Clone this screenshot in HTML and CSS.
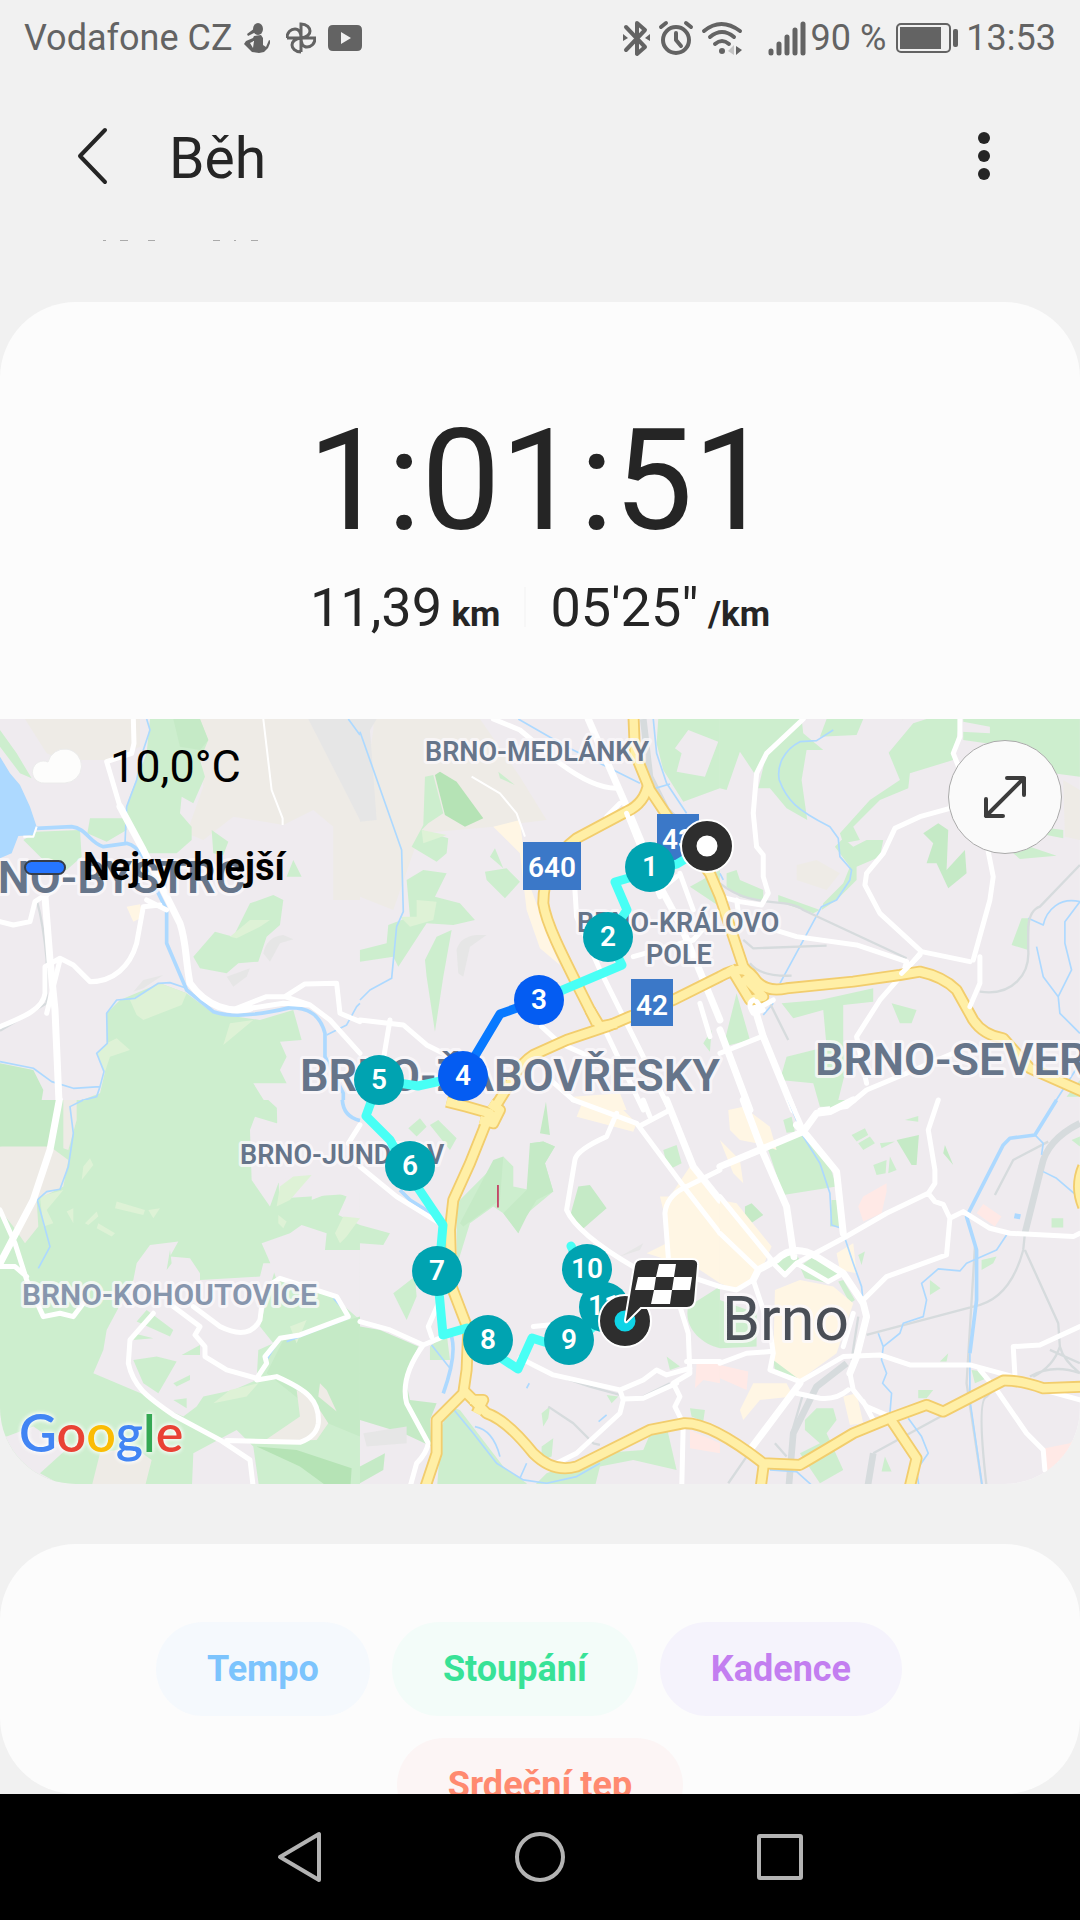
FILE: index.html
```
<!DOCTYPE html>
<html lang="cs">
<head>
  <meta charset="UTF-8" />
  <meta name="viewport" content="width=device-width, initial-scale=1.0" />
  <title>Běh</title>
  <link rel="stylesheet" href="styles.css">
</head>
<body>
  <div class="status-bar">
    <div class="status-left">
      <span>Vodafone CZ</span>
      <svg class="icon-run" width="26" height="30" viewBox="0 0 26 30">
        <ellipse cx="14" cy="6" rx="5" ry="6"/>
        <path d="M11 5 L3 11 4 13 12 9Z M10 13 L17 12 19 15 19 22 22 24 25 17 27 18 24 25 20 29 15 30 8 29 0 21 2 18 9 15Z M6 20 L9 25 10 18Z" fill-rule="evenodd"/>
      </svg>
      <svg class="icon-photos" width="30" height="32" viewBox="0 0 30 32">
        <path d="M15 30V2C21 2 24 6 24 9C24 13 20 15 16 16M1 16H29C29 22 25 25 21 25C17 25 15 21 15 16M15 30C9 30 6 26 6 23C6 19 10 17 14 16M1 16C1 10 5 7 9 7C13 7 15 11 15 16"/>
      </svg>
      <svg class="icon-video" width="34" height="26" viewBox="0 0 34 26">
        <path d="M5 0H29Q34 0 34 5V21Q34 26 29 26H5Q0 26 0 21V5Q0 0 5 0Z M13 7V19L23 13Z" fill-rule="evenodd"/>
      </svg>
    </div>
    <div class="status-right">
      <svg width="28" height="36" viewBox="0 0 28 36">
        <path class="line" d="M3 7 L22 27 14 34 V3 L22 10 3 30"/>
        <path d="M0 14 L5 18 0 21Z M27 14 L22 18 27 21Z"/>
      </svg>
      <svg width="34" height="36" viewBox="0 0 34 36">
        <circle class="line" cx="17" cy="20" r="13"/>
        <path class="line" d="M17 13V20L22 26 M2 7L7 3 M32 7L27 3"/>
      </svg>
      <svg class="icon-wifi" width="42" height="36" viewBox="0 0 42 36">
        <path class="line" d="M3 11Q20 -3 39 11 M9 17Q21 7 33 17 M14 24Q21 18 28 24"/>
        <circle cx="21" cy="31" r="3"/>
        <path fill="#c4c4c4" d="M33 25V35L27 31Z"/>
        <path d="M35 26L41 30 35 35Z"/>
      </svg>
      <svg class="icon-signal" width="36" height="36" viewBox="0 0 36 36">
        <path class="bars" d="M2 31V33 M10 24V33 M18 17V33 M26 10V33 M34 4V33"/>
      </svg>
      <span class="percent">90 %</span>
      <svg class="icon-battery" width="62" height="30" viewBox="0 0 62 30">
        <rect class="frame" x="1" y="1" width="53" height="28" rx="4"/>
        <rect x="4" y="4" width="41" height="22"/>
        <rect x="57" y="6" width="5" height="18" rx="2"/>
      </svg>
      <span>13:53</span>
    </div>
  </div>

  <header class="app-bar">
    <button class="icon-btn back" aria-label="Zpět">
      <svg width="34" height="60" viewBox="0 0 34 60"><path d="M30 4L5 30 30 56"/></svg>
    </button>
    <h1>Běh</h1>
    <button class="icon-btn more" aria-label="Další možnosti">
      <svg width="12" height="48" viewBox="0 0 12 48">
        <circle cx="6" cy="6" r="6"/><circle cx="6" cy="24" r="6"/><circle cx="6" cy="42" r="6"/>
      </svg>
    </button>
  </header>

  <main>
    <svg class="scrolled-text" width="160" height="2" viewBox="0 0 160 2">
      <path d="M3 .5h3 M20 .5h8 M48 .5h7 M113 .5h7 M134 .5h2 M151 .5h7"/>
    </svg>

    <section class="card summary">
      <div class="duration">1:01:51</div>
      <div class="stats">
        <span>11,39 <b>km</b></span>
        <span class="divider"></span>
        <span>05'25" <b>/km</b></span>
      </div>

      <div class="map">
        <svg class="map-canvas" viewBox="0 0 1080 765" preserveAspectRatio="xMidYMid slice">
          <defs>
            <g id="highways">
              <path d="M1900 0L1905 130 1950 240 2010 330 2130 490 2160 560 2200 680 2230 770 2290 840"/>
              <path d="M1945 220Q1935 280 1880 305L1730 385Q1630 460 1630 580C1640 650 1700 760 1790 940"/>
              <path d="M1480 1200L1530 1120Q1560 1060 1600 1035L1700 990 1820 950 1890 920 2020 870 2160 800Q2230 760 2260 800 2290 850 2360 835L2560 815 2700 795 2760 785Q2830 800 2870 840L2920 930Q2950 975 3010 985L3090 1075 3260 1150"/>
              <path d="M1340 1175L1400 1190 1470 1210 1450 1260 1410 1360 1360 1470 1350 1560 1355 1730 1405 1860 1400 1980 1390 2050 1310 2130 1310 2230 1270 2350"/>
              <path d="M1390 2040L1460 2110Q1520 2130 1600 2230 1660 2290 1730 2270L1950 2160 2050 2140Q2130 2135 2290 2260L2400 2265Q2460 2230 2560 2170L2670 2125 2780 2085 2830 2105 3010 2012Q3060 2010 3130 2035L3260 2030"/>
              <path d="M2292 2260L2280 2350 M2670 2125L2750 2245 2725 2350 M3250 1370Q3225 1430 3250 1490"/>
              <path d="M2190 770L2250 870 2290 860 2230 800 M1470 1180L1500 1200 1480 1240 1440 1230 M1410 2070L1450 2070 1430 2110 M1770 900L1800 950 1850 940"/>
            </g>
          </defs>

          <g transform="scale(.3333) translate(0 -27)">
            <rect class="land" width="3240" height="2340"/>

            <!-- north west -->
            <g>
              <path class="field" d="M560 370L610 230 600 27H1080V570H1000V350L940 300 850 345 700 320 610 390Z M75 27H420V110L330 150 190 150 140 130Z"/>
              <path class="airport" d="M925 27H1080V330Z"/>
              <path class="park" d="M450 27H600L625 90 600 150 615 200 580 280 545 260 540 310 575 350 575 390 530 430 440 430 375 310 385 270 440 130Z M0 60L50 130 95 205 60 190 0 110Z M70 390L110 365 240 360 245 440 200 480 160 480 110 430Z M270 325L375 325 380 360 320 395 262 370Z M635 360L685 395 670 435 640 430Z M580 740L645 665 700 680 750 580 820 555 850 570 840 645 800 680 775 755 715 760 680 790 600 775Z M860 500L880 450 905 500Z"/>
              <path class="park" d="M210 1200L220 1180 300 1150 315 1085 290 1030 320 1000V910L360 870 480 820 560 850 640 910 780 930 880 900 905 990 840 995 860 1040 840 1080 860 1120 760 1120 810 1200Z"/>
              <path class="wood" d="M0 1060L100 1080 130 1140 120 1200H0Z M520 27H600L625 90 600 120 540 110Z"/>
              <path class="meadow" d="M690 680L750 630 810 630 780 650 710 685Z M480 820L560 850 545 885 430 930 410 915 390 870Z M320 1000L290 1030 315 1085 330 1040 390 1020 350 985Z M670 1005L690 940 760 930Z"/>
              <path class="quiet" d="M790 730Q800 680 850 675L880 688 840 700 810 755Z M680 800L750 775 740 800 700 830Z M400 845L430 810 490 795 430 835Z"/>
              <path class="built" d="M380 590L420 583 430 620 400 635Z"/>
              <path class="lake" d="M0 140L30 190 60 225 90 290 110 350 105 375 55 378 35 430 0 445Z"/>
              <path class="rail" d="M110 570Q130 640 140 750V880L0 962"/>
              <path class="river" d="M110 355L215 350C260 355 270 400 310 410L380 400C420 410 440 450 470 540L500 600V700L560 840 640 905C700 925 780 915 870 893 920 893 960 910 975 970V1040L1030 1150V1200"/>
              <path class="stream" d="M440 27L450 60 430 120 410 210 380 290 375 400 M560 835L510 818 475 820 405 865 350 870 320 910 322 1000 290 1030 312 1085 300 1130 220 1135 155 1115 100 1075 0 1055 M300 1130L290 1160 215 1180 205 1200 M980 975L1040 945 1070 890 1080 880 M1045 27L1080 75"/>
              <path class="road wide" d="M135 560L150 750 165 900 178 1200 M360 290L430 420 500 560 540 640C560 700 555 740 570 820 620 890 690 910 750 895"/>
              <path class="road" d="M400 27L402 100 395 130 320 155 360 290 M440 570L500 600 M200 500L135 560 M0 635L40 645 90 635 105 575 135 555 M0 950C60 925 130 900 135 850V770L180 745 220 765 270 815C340 815 390 770 410 700L430 590 480 585 M710 895L800 860H855L930 885 990 930 1080 1030 M750 895L850 880 930 885 M855 860L915 822 1010 820 1020 910 1080 935 M140 910L180 750"/>
              <path class="lane" d="M790 27L815 240 848 325V345 M110 350L100 380H70"/>
            </g>

            <!-- north -->
            <g transform="translate(1080 0)">
              <path class="field" d="M40 27H360L480 200 560 330 400 350 180 370 100 600 0 560V330L40 60Z"/>
              <path class="airport" d="M0 27H50L30 60 50 330 0 335Z"/>
              <path class="park" d="M195 200L220 195 250 310 205 340 185 360 265 385 260 430 230 455 155 410 190 345Z M140 510L190 480 260 490 225 560 300 580 345 630 280 645 200 640 115 770 100 740 0 755V720L80 700 85 645 150 620Z M195 750L230 680 275 660 250 800 225 965 200 800Z M375 485L440 475 480 515 435 565 380 510Z M390 440L405 415 430 475Z M415 185L465 225 420 205Z M895 27H1080V235L970 275 910 180 890 100Z M990 530L1080 480V590Z M1030 1000L1055 960 1050 1025Z"/>
              <path class="land" d="M985 60L1075 95 1035 200 950 185 965 130 945 115Z"/>
              <path class="dark-wood" d="M225 195L240 185 290 215 370 325 315 350 255 315Z"/>
              <path class="meadow" d="M170 570L230 575 220 630 150 650 120 620 170 620Z M185 360L260 375 190 400Z"/>
              <path class="quiet" d="M290 720Q300 680 350 675H380L330 710 310 800 295 790Z"/>
              <path class="built" d="M400 350L480 330 500 500 580 720 600 765 540 715 500 600 480 430Z M640 1160L780 1150 800 1200H680Z"/>
              <path class="rail-wide" d="M850 27L870 200 920 300 1000 380"/>
              <path class="stream" d="M0 65L125 420 130 605 110 650 95 805 30 840 0 870 M475 27L620 110 840 220 M880 27L890 130 920 220 980 310 M885 235L930 222"/>
              <path class="road wide" d="M685 27L800 290 900 530 960 640 1010 760 1080 930"/>
              <path class="road" d="M400 27L480 60 600 160Q700 235 770 235 M740 320L780 280 M0 930L130 945 200 1005 290 1050 380 1080 M90 930L70 1050 M645 540L650 620 720 780 930 1200 M545 950L600 1000 700 1045 780 1060 M960 490L1000 600 M820 740L1000 690 1080 600 M740 970L850 1200 M560 1100L640 1170 M415 920L500 890 M950 500L900 540"/>
              <path class="lane" d="M335 200L420 250 470 310 495 380"/>
            </g>

            <!-- north east -->
            <g transform="translate(2160 0)">
              <path class="park" d="M0 27H245L250 70 310 120 260 120 245 210 262 330 200 295 150 235H115L140 130 110 200 60 125 20 240 0 235Z M320 27H430L410 75 300 80Z M550 27H720L700 150 570 190 565 235 480 270 400 350 420 390 370 400 360 370 450 270 540 210 505 125 515 80Z M730 27H1080V200L1000 190 940 120 730 90Z M440 390H490L480 440 410 470V510L350 570 305 600 310 580 370 520 390 470 345 410 370 385 400 410Z M20 490L50 480 60 510 130 540V575L60 560 20 530Z M175 555L300 600 280 610 175 575Z M185 880L300 870 460 835 460 875 370 885V1000L380 1070 350 1190H300L280 1120 180 1110 200 1040 320 1010 310 900 220 925Z M515 880L590 900 575 940 540 940Z M50 850L90 990 10 1010Z M905 625H930L925 720 875 705Z M880 430L930 410 1010 437 900 447Z M990 355L1030 360V385L980 375Z M1040 1160L1080 1110V1160Z"/>
              <path class="wood" d="M610 370L655 340 685 360 680 480 735 420 740 490 685 535 650 460 620 460 640 400Z"/>
              <path class="land" d="M730 35L810 50 810 70 725 65Z M580 40L620 27 550 27 500 80 505 130Z"/>
              <path class="field" d="M230 465L290 450 360 490 320 540 230 510Z M1030 210L1080 240V390L1035 380Z"/>
              <path class="stream" d="M340 60L290 92 240 95C190 120 170 170 178 210 200 270 230 300 330 350L355 385 360 440 395 480 390 510 350 570 305 590 180 820 M1080 575L1035 635V700L1055 780 1015 860 1020 910 1080 970 M1080 575C1020 560 980 600 970 645L925 625 M950 710L970 800 1015 860 M1080 1060L990 1200 M0 490L10 510 M130 915L160 880 M180 1120L215 1200"/>
              <path class="rail" d="M0 520C100 600 200 560 250 600L560 745 M780 845C880 860 930 790 925 720V650Q930 600 960 590L1080 465 M70 690L100 715 320 707 M90 760Q120 800 215 797 M150 880L205 990"/>
              <path class="road" d="M250 27L140 130 110 190 100 310 110 410 130 435V500L145 550 125 585 60 575 0 560 M720 27V80L700 130 720 180 690 295 600 320 525 355 490 430 440 490 435 525 480 610 605 725 750 755 M800 400L820 500 810 570 760 750 M605 725L550 790 480 870 410 980 440 1120 M100 640L230 680 410 705 560 755 550 790 M0 1030L125 980 M300 1200L380 1190 440 1140 560 1090 700 1030 M50 570L60 640"/>
              <path class="road wide" d="M100 880L130 980 220 1200 M0 960L90 1200"/>
            </g>

            <!-- south west -->
            <g transform="translate(0 1170)">
              <path class="park" d="M0 0H830L860 1180H0Z M770 300L1080 280V1180H770Z"/>
              <path class="land" d="M805 0L860 50 830 70 765 50 750 90 755 240 810 320 835 250 870 225 940 225 935 300 1000 275 1040 290 1015 345 1080 375V0Z M785 430L870 400 905 375 980 400 975 450H1080V660L1000 590 830 540 820 510Z M450 435L535 425 510 470 570 475 600 520 600 540 780 530 790 490 830 490 800 600 780 680 820 730 775 750 770 840 700 870 610 890 590 920 550 950 480 920 470 900 280 820 310 750 320 690 400 540 410 490Z M20 1010L100 980 220 1060 170 1160H0V1000Z M575 1180L580 1060 710 990 760 1040 780 1180Z"/>
              <path class="field" d="M0 140L40 130 150 140 205 180 190 260 110 300 115 380 75 430 40 380 0 330Z M270 1180L300 1060 400 1040 455 1080 430 1180Z M190 0H230V60L205 150 190 145Z"/>
              <path class="wood" d="M0 0H175L160 140 0 140Z M800 820L850 720 1080 650V1010L960 960 900 900Z"/>
              <path class="field" d="M890 870L940 900 985 970 950 1020 790 1025 900 950Z M960 850L980 870 1010 935 955 890Z"/>
              <path class="park" d="M400 780L470 770 530 785 475 880 430 850Z M440 630L520 690 510 710 410 665Z M520 850L570 825V840L530 860Z M400 700L460 715 400 720Z M510 450L500 510 515 490Z M120 1120L230 1020 260 1040 175 1150Z M545 765L600 735V765Z M520 900L560 895 560 925Z"/>
              <path class="dark-wood" d="M770 1040L890 1050 1055 1105 1050 1180H1010L900 1100Z"/>
              <path class="meadow" d="M350 305L435 330 430 345 345 325Z M445 330L480 325 460 355Z M250 200L270 175 280 195 245 240Z M255 370L290 335 295 350 265 375Z M295 370L345 400 335 410 290 385Z M200 335L220 325V370Z M120 290L190 270 140 330 160 370 130 380Z M640 910L690 870 775 850 740 890Z M830 320L840 260 880 230 935 225 870 300Z M1005 400L1030 350 1080 355 1040 410 1020 430Z M835 345L860 365 850 385 835 370Z M870 680L920 660 890 730Z"/>
              <path class="stream" d="M250 0L210 20 220 100 205 200 180 268 140 275 112 300 150 440 115 505 M1045 655L860 725 M1000 595L1040 640 M800 780L825 740"/>
              <path class="river" d="M1027 0Q1030 50 1080 62"/>
              <path class="road wide" d="M178 0L150 150 100 300 0 490"/>
              <path class="road" d="M0 330L45 430 80 540 130 650 180 640 220 650 250 610 M0 500H45L80 530 M460 640L390 720 385 790C400 860 440 890 520 945L660 1020 750 1080 762 1180 M520 620L600 680 585 705 615 740V770L680 810 770 835 800 790 795 770 840 715 900 705 1045 650 1010 590 840 535 800 560 M580 620L660 680C720 710 760 700 780 660L790 580 M770 840L830 830C920 870 960 900 955 970Q950 1010 900 1027L680 1022 M1080 75L1045 130"/>
            </g>

            <!-- south -->
            <g transform="translate(1080 1170)">
              <path class="park" d="M430 170L460 200V260L510 270V130L550 125 585 140 555 190 580 275 490 350 475 400 430 340 400 320 330 370 290 500V310Z M145 85L180 55 200 80 170 110Z M210 75L235 60 290 115 270 150Z M0 375L90 400 70 435 0 430Z M100 580L165 530 170 590 140 660Z M245 980L270 920 300 930 430 1100 500 1150V1180H230Z M500 1180L560 1120 720 1060 850 1050 880 980 920 980 950 1110 820 1080 720 1100 700 1180Z M985 620L1080 560V745C1020 730 970 680 985 620Z M545 1040L580 1015 575 1070 545 1080Z M545 940L570 920 565 955 550 980Z M210 740L260 700 270 780H210Z M740 885L775 890 755 910Z M920 770L960 800 930 810Z M990 925L1035 930 1030 965 995 950Z M910 150L950 135 965 190 925 210Z"/>
              <path class="wood" d="M0 680L60 690 175 740 135 830 150 900 230 910 210 960 215 1040 130 1000 0 960Z M655 260L690 255 740 325 665 390 630 350Z M540 100L558 5 570 105Z M510 130L550 125 585 140 555 190 580 275 530 300 500 350 475 400 430 340 500 270Z M0 1100L75 1060 70 1110 0 1150Z M400 180L430 170 420 300 310 380 300 370Z"/>
              <path class="quiet" d="M10 1000L140 980V1030L20 1040Z M780 470L850 430 840 450Z"/>
              <path class="built" d="M650 50L670 0H760L830 70 820 95Z M900 290L930 290 990 200 1080 300V550L1020 510 860 460 920 430 910 330Z"/>
              <path class="medical" d="M1010 790H1080V850L1030 840 1005 865Z M990 990L1080 1030V1060L990 1045Z"/>
              <path class="rail" d="M565 920L640 970 700 1030 720 1035 M500 790L600 830 690 860 780 885 M850 890L930 850"/>
              <path class="river" d="M120 270L150 300 230 350 M265 690Q300 740 250 880"/>
              <path class="stream" d="M215 735L270 805 M270 915L340 1000 410 1090 490 1140 560 1150 650 1130 720 1090 M345 980Q400 990 420 1070 M500 1090L480 1135 M500 865L508 850 M716 965L740 945"/>
              <path class="road" d="M0 200L110 290 240 370 M0 665L90 690 190 735 250 710 M190 735Q120 830 140 910L205 1030Q200 1060 170 1090L145 1180 M240 600L205 680 215 710 M480 775L580 825 780 870 850 840 890 810 920 825 990 805 M780 870L790 900 780 940 650 1060 590 1090H540 M790 897L850 895 950 850 M925 470Q925 550 960 620L985 700 990 820 940 850 960 890 945 920 970 970 965 1180 M980 785L1080 785 M640 0L830 70 975 265 1080 400 M770 40L740 110Q650 150 645 180L620 330Q650 400 820 500H900L1080 560 M845 75L930 30 M850 0L870 50 M970 265L1080 210 M970 265Q920 290 915 340L925 470 M520 680L620 670"/>
              <path class="road wide" d="M920 0L1000 200 1080 300"/>
            </g>

            <!-- centre and south east -->
            <g transform="translate(2160 1170)">
              <path class="park" d="M145 150L250 100 330 200 350 260 190 285Z M335 300H355L362 380H330Z M395 105L435 85 445 105 410 125Z M415 130L450 110 465 130 430 150Z M460 195L500 180 497 220 470 225Z M505 220L510 170 530 210Z M480 130L525 125 485 145Z M165 490L220 450 240 480 200 520Z M240 500L280 470 360 525 325 550 255 535Z M355 545L370 540 405 600 390 610Z M255 960L290 925H340L350 960 320 1000 370 1110 300 1150 240 1060 300 1030 255 990Z M190 60L215 50 225 95 200 98Z M595 870H640L620 895H595Z M995 355H1030V383H995Z M160 780L240 810 245 840 165 810Z M0 600L110 640V740L0 745Z M630 540L662 565 630 585Z M785 480L830 470 820 490 785 510Z M755 810L790 815 800 835 765 850Z M415 465L435 455 425 495Z M485 1115L495 1070 515 1115Z M330 0H390L330 25Z M555 60L595 48V65Z M660 785L685 760 680 785Z M1055 120L1080 110V140Z"/>
              <path class="wood" d="M530 120L597 105 590 195H575Z M75 320L95 310 130 345 90 372 75 350Z M675 135L700 195 670 160Z"/>
              <path class="built" d="M25 30L70 20 150 80 170 150 110 130 60 120 30 90Z M0 120L60 180 70 250 40 220Z M0 300L50 310 155 440 120 520 50 570 0 550Z M165 570L240 540 340 560 400 610 350 760 240 840 160 780Z M370 890L410 880 430 970 390 975Z M60 930L100 850 200 850 220 890 120 900 70 960Z M350 460L400 430 410 520 360 510Z"/>
              <path class="medical" d="M430 290L500 250V275L485 340 430 365 415 320Z M770 340L790 312 845 350 825 380Z M0 795L85 815 80 870 0 835Z M975 1045L1050 1030 1080 1000V1180H980Z"/>
              <path class="rail-wide" d="M1080 70Q980 120 965 200L915 400 M440 1180L460 1060 M380 790L290 860 220 1000 205 1180"/>
              <path class="rail" d="M915 400L910 450Q870 600 760 620L440 705 M915 450L1015 670 1020 740Q1030 780 1080 820 M765 440L740 850 790 1180 M415 650L395 780 M460 1060L680 940 M930 830Q1000 790 1080 820 M825 285L880 180 985 125 M250 880L215 1000 M1020 740Q1000 800 940 830 M990 750L1080 790 M800 1160Q770 900 800 890L830 860 M165 1030L200 1070 M25 1150L80 1070"/>
              <path class="stream" d="M205 0L250 110 300 190 330 280 335 375 365 385 400 490 425 560 430 610 M750 760V900L790 1180 M860 405L830 450 740 490 720 513 655 507 605 550 620 600 610 650 550 670 540 700 490 740 M475 700L490 740 485 780 500 820 488 850 515 880 510 940 M565 955L605 1010 625 1060 590 1110 600 1180 M150 1110L230 1115 280 1160 M970 215L1010 235 1080 295 M965 165L970 130 945 105"/>
              <path class="river" d="M1010 0L945 105 870 115 850 135 740 350 770 450V600L750 760"/>
              <path class="road wide" d="M70 0L130 160 200 320 222 470 M230 75L260 105 350 215 370 400 M0 200L250 95 290 40 330 35 400 0 M100 540L115 510 170 480Q220 430 290 470L370 520 430 610 440 650 410 770 390 820 M240 850L90 1050"/>
              <path class="road" d="M210 0L250 90 M655 0L625 90 645 210V250L625 280 500 340 370 415 230 490 195 525 150 480 M625 280L645 305 670 313 690 355 680 465 500 530 430 600 M690 355L730 335 810 385 870 400 1060 410 1080 400 M0 290L155 480 M0 400L110 505 M0 560L50 570 100 540 150 690 160 760 150 810 240 845 370 770 M0 790L80 760 150 755 M390 820L400 870 440 920 510 950 M230 490L325 545 370 520 M370 770L480 765 570 795H750L880 830 M385 870Q350 900 300 895L230 880 M885 825L880 740 960 735 1080 680 M780 810L830 870 920 1000 970 1050 975 1110 M990 875L1080 900 M370 740L400 640 M430 905L460 960"/>
              <path class="pond" d="M885 340L903 343 900 358 882 355Z"/>
            </g>

            <use href="#highways" class="highway-edge"/>
            <use href="#highways" class="highway"/>
            <path class="road" d="M1880 310L1980 560 M2100 880L2130 980 M2265 900L2320 870 M2705 790L2760 735 M2940 740V820L2910 890 M2260 870Q2240 880 2260 910L2290 900 2270 875"/>
            <path class="tram" d="M1494 1425V1493"/>
          </g>

          <g class="labels">
            <text class="place" x="425" y="42">BRNO-MEDLÁNKY</text>
            <text class="place" x="577" y="213">BRNO-KRÁLOVO</text>
            <text class="place" x="646" y="245">POLE</text>
            <text class="place large" x="245" y="174" text-anchor="end">BRNO-BYSTRC</text>
            <text class="place large" x="300" y="372">BRNO-ŽABOVŘESKY</text>
            <text class="place large" x="815" y="356">BRNO-SEVER</text>
            <text class="place" x="240" y="445">BRNO-JUNDROV</text>
            <text class="place pale" x="22" y="586">BRNO-KOHOUTOVICE</text>
            <text class="city" x="722" y="621">Brno</text>
          </g>

          <g class="shields">
            <rect x="523" y="123" width="58" height="48"/><text x="552" y="158">640</text>
            <rect x="657" y="95" width="42" height="48"/><text x="678" y="130">43</text>
            <rect x="631" y="260" width="42" height="47"/><text x="652" y="296">42</text>
          </g>

          <path class="route" d="M707 127L677 145 615 163 627 191 608 218 622 246 539 281 M463 357L418 367 379 361 M379 361L366 397 390 421 410 457 443 506 438 562 443 616 467 609 489 631 518 650 532 619 569 631 604 597 587 560 571 527"/>
          <path class="route fastest" d="M539 281L500 295 463 357"/>

          <g class="pins">
            <circle cx="604" cy="588" r="25"/><text x="604" y="596">11</text>
            <circle cx="650" cy="148" r="25"/><text x="650" y="157">1</text>
            <circle cx="608" cy="218" r="25"/><text x="608" y="227">2</text>
            <circle class="fast" cx="539" cy="281" r="25"/><text x="539" y="290">3</text>
            <circle class="fast" cx="463" cy="357" r="25"/><text x="463" y="366">4</text>
            <circle cx="379" cy="361" r="25"/><text x="379" y="370">5</text>
            <circle cx="410" cy="447" r="25"/><text x="410" y="456">6</text>
            <circle cx="437" cy="552" r="25"/><text x="437" y="561">7</text>
            <circle cx="488" cy="621" r="25"/><text x="488" y="630">8</text>
            <circle cx="569" cy="621" r="25"/><text x="569" y="630">9</text>
            <circle cx="587" cy="550" r="25"/><text x="587" y="559">10</text>
          </g>

          <g>
            <circle class="start" cx="707" cy="127" r="18"/>
            <circle class="ring" cx="707" cy="127" r="26"/>
            <circle class="start end" cx="625" cy="602" r="18"/>
            <circle class="ring" cx="625" cy="602" r="26"/>
            <path class="flag" d="M642 540H692Q699 540 698 547L695 582Q694 589 687 589H641L627 603Q625 604 625 601L634 547Q635 540 642 540Z"/>
            <path class="checks" d="M659 545H676L674 558H656Z M638 558H656L654 571H635Z M674 558H692L690 571H672Z M654 571H672L670 585H651Z"/>
          </g>
        </svg>

        <div class="weather">
          <svg width="54" height="38" viewBox="0 0 54 38">
            <path d="M13 35A11 11 0 1 1 17 14 17 17 0 1 1 34 35Z"/>
          </svg>
          <span>10,0°C</span>
        </div>
        <div class="legend"><i></i><b>Nejrychlejší</b></div>
        <button class="expand" aria-label="Zvětšit mapu">
          <svg width="44" height="44" viewBox="0 0 44 44"><path d="M3 41L41 3M24 3H41V20M3 24V41H20"/></svg>
        </button>
        <div class="google"><span>G</span><span class="red">o</span><span class="yellow">o</span><span>g</span><span class="green">l</span><span class="red">e</span></div>
      </div>
    </section>

    <section class="card charts">
      <div class="chips">
        <button class="chip pace">Tempo</button>
        <button class="chip climb">Stoupání</button>
        <button class="chip cadence">Kadence</button>
      </div>
      <div class="chips">
        <button class="chip heart">Srdeční tep</button>
      </div>
    </section>
  </main>

  <nav class="nav-bar">
    <button aria-label="Zpět"><svg width="52" height="56" viewBox="0 0 52 56"><path d="M45 5V51L6 28Z"/></svg></button>
    <button aria-label="Domů"><svg width="52" height="56" viewBox="0 0 52 56"><circle cx="26" cy="28" r="23"/></svg></button>
    <button aria-label="Přehled"><svg width="52" height="56" viewBox="0 0 52 56"><rect x="5" y="7" width="42" height="42" rx="1"/></svg></button>
  </nav>
</body>
</html>
```
FILE: styles.css
```
* { box-sizing: border-box; }
body { margin: 0; height: 100vh; display: flex; flex-direction: column; background: #f1f1f1; color: #252525; font-family: Roboto, "Noto Sans", sans-serif; overflow: hidden; }
button { border: 0; padding: 0; background: none; font-family: inherit; display: flex; align-items: center; justify-content: center; }
svg { display: block; flex: none; }

/* status bar */
.status-bar { height: 76px; padding: 0 24px; display: flex; justify-content: space-between; align-items: center; font-size: 36px; color: #636363; }
.status-left, .status-right { display: flex; align-items: center; }
.status-bar svg { fill: #636363; }
.status-bar .line { fill: none; stroke: #636363; stroke-width: 4; stroke-linecap: round; stroke-linejoin: round; }
.status-bar .bars { stroke: #636363; stroke-width: 5; stroke-linecap: round; }
.status-left { gap: 12px; }
.icon-photos { margin-left: 4px; }
.status-bar .icon-photos { fill: none; stroke: #636363; stroke-width: 3; }
.status-right svg { margin-right: 8px; overflow: visible; }
.status-right .icon-wifi { margin-right: 26px; }
.status-right .icon-signal { margin-right: 6px; }
.percent { margin-right: 10px; }
.frame { fill: none; stroke: #636363; stroke-width: 2; }

/* title */
.app-bar { height: 164px; padding: 0 90px 4px 75px; display: flex; align-items: center; }
.app-bar h1 { flex: 1; margin: 4px 0 0 60px; font-size: 57px; font-weight: 400; }
.back path { fill: none; stroke: #252525; stroke-width: 4; stroke-linecap: round; stroke-linejoin: round; }
.more svg { fill: #252525; }

main { flex: 1; min-height: 0; display: flex; flex-direction: column; overflow: hidden; }
.scrolled-text { margin: 0 0 60px 100px; stroke: #aaa; }
.card { background: #fcfcfc; border-radius: 76px; overflow: hidden; }
.summary { flex: none; text-align: center; }
.duration { margin-top: 96px; font-size: 141px; line-height: 166px; }
.stats { height: 86px; margin-bottom: 69px; display: flex; justify-content: center; align-items: center; gap: 24px; font-size: 54px; }
.stats b { margin-left: -4px; font-size: 35px; }
.divider { width: 2px; height: 40px; background: #f7f7f7; }

/* map */
.map { position: relative; height: 765px; }
.map-canvas { width: 100%; height: 100%; }
.land { fill: #efebef; }
.park { fill: #cdeece; }
.wood { fill: #c5eac6; }
.dark-wood { fill: #b5e3b5; }
.meadow { fill: #def2d6; }
.field { fill: #eeebe6; }
.airport, .quiet { fill: #e6e6e6; }
.built { fill: #fff6e4; }
.medical { fill: #ffe9e6; }
.lake, .pond { fill: #add9ff; }
.river, .stream, .rail, .rail-wide, .road, .lane { fill: none; stroke-linejoin: round; }
.river { stroke: #add9ff; stroke-width: 11; }
.stream { stroke: #add9ff; stroke-width: 5; }
.rail { stroke: #d6dbdd; stroke-width: 7; }
.rail-wide { stroke: #d6dbdd; stroke-width: 20; }
.road { stroke: #fff; stroke-width: 15; stroke-linecap: round; }
.road.wide { stroke-width: 21; }
.lane { stroke: #fff; stroke-width: 6; }
.highway, .highway-edge { fill: none; stroke-linejoin: round; }
.highway-edge { stroke: #f2cd6d; stroke-width: 36; }
.highway { stroke: #ffefa6; stroke-width: 25; }
.tram { stroke: #c2335b; stroke-width: 5; }

.labels text { stroke: #fbf9fb; stroke-width: 6px; stroke-opacity: .8; paint-order: stroke; stroke-linejoin: round; }
.place { font-size: 27px; font-weight: 600; fill: #66758a; }
.place.large { font-size: 45px; }
.place.pale { font-size: 30px; fill: #8796ad; }
.city { font-size: 61px; fill: #4a4f57; }
.shields rect { fill: #3b78c8; }
.shields text, .pins text { fill: #fff; text-anchor: middle; font-weight: 600; }
.shields text { font-size: 28px; }
.pins text { font-size: 28px; }
.pins circle { fill: #00a3b1; }
.pins .fast { fill: #045cf2; }
.route { fill: none; stroke: #48fff5; stroke-width: 9; stroke-linejoin: round; stroke-linecap: round; }
.route.fastest { stroke: #0879ff; }
.start { fill: #fff; stroke: #2e2e2e; stroke-width: 15; }
.start.end { fill: #0fd4e6; }
.ring { fill: none; stroke: #fff; stroke-width: 2; }
.flag { fill: #2e2e2e; stroke: #fff; stroke-width: 2; }
.checks { fill: #fff; }

.weather, .legend { position: absolute; display: flex; align-items: center; color: #000; }
.weather { top: 21px; left: 31px; gap: 25px; font-size: 45px; }
.weather path { fill: #fdfdfc; stroke: #ececec; }
.legend { top: 126px; left: 24px; gap: 17px; font-size: 38px; }
.legend i { width: 42px; height: 15px; border: 2px solid #353c48; border-radius: 8px; background: #2676ff; }
.expand { position: absolute; top: 21px; right: 18px; width: 114px; height: 114px; border: 1px solid #aaa; border-radius: 50%; background: #fafafa; }
.expand path { fill: none; stroke: #3c3c3c; stroke-width: 4; stroke-linecap: round; stroke-linejoin: round; }
.google { position: absolute; left: 19px; bottom: 20px; color: #4285f4; font-family: Lato, sans-serif; font-size: 52px; font-weight: 600; line-height: 64px; text-shadow: 0 0 5px #fff, 0 0 5px #fff; }
.google .red { color: #e94235; }
.google .yellow { color: #fbbc05; }
.google .green { color: #34a853; }

/* chart switcher */
.charts { flex: 1; min-height: 0; margin-top: 60px; padding-top: 78px; }
.chips { display: flex; justify-content: center; gap: 22px; margin-bottom: 22px; }
.chips:first-child { padding-right: 22px; }
.chip { height: 94px; padding: 0 51px; border-radius: 47px; font-size: 36px; font-weight: 700; flex: none; }
.pace { background: #f5f9fd; color: #7cc4fd; }
.climb { background: #f3fcf9; color: #38e297; }
.cadence { background: #f5f3fc; color: #c37ef0; }
.heart { background: #fcf5f5; color: #ff8a70; }

/* system buttons */
.nav-bar { height: 126px; padding: 0 274px; display: flex; justify-content: space-between; align-items: center; background: #000; }
.nav-bar svg { fill: none; stroke: #b3b3b3; stroke-width: 4; stroke-linejoin: round; }
```
